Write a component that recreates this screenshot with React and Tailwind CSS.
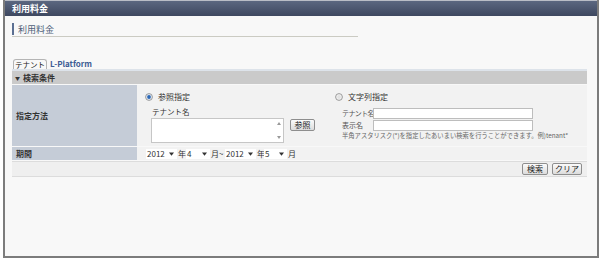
import React from "react";

const font = { fontFamily: '"Noto Sans CJK JP", "Noto Sans", sans-serif' };

function Radio({ on }) {
  return (
    <svg width="8" height="8" viewBox="0 0 8 8" className="shrink-0">
      <circle cx="4" cy="4" r="3.4" fill={on ? "#e8eef6" : "#f4f4f4"} stroke="#8f8f8f" strokeWidth="0.9" />
      {on ? <circle cx="4" cy="4" r="1.9" fill="#2b67b5" /> : <circle cx="4" cy="4" r="1.9" fill="#e2e2e2" />}
    </svg>
  );
}

function Tri() {
  return (
    <svg width="5" height="4" viewBox="0 0 5 4" className="shrink-0">
      <path d="M0 0.5 L5 0.5 L2.5 3.8 Z" fill="#333" />
    </svg>
  );
}

function Sel({ v, w }) {
  return (
    <div className={`flex items-center justify-between bg-white h-[10px] pl-[1px] pr-[3px] ${w}`}>
      <span className="leading-none">{v}</span>
      <Tri />
    </div>
  );
}

function Btn({ children, w }) {
  return (
    <div
      className={`flex items-center justify-center h-[12px] border border-[#8e8e8e] rounded-[2px] bg-gradient-to-b from-[#fbfbfb] to-[#dcdcdc] text-[8px] leading-none text-[#222] ${w}`}
    >
      {children}
    </div>
  );
}

export default function App() {
  return (
    <div className="w-[600px] h-[260px] bg-white overflow-hidden" style={font}>
      <div className="ml-[3px] w-[596px] h-[258px] border-l-2 border-r-2 border-b-2 border-[#7c7c7c] bg-[#f8f8f8] flex flex-col">
        {/* title bar */}
        <div className="h-[16px] border-t border-[#b9bdc6] bg-gradient-to-b from-[#5b6780] to-[#3e4860] flex items-center pl-[7px]">
          <span className="text-white font-bold text-[9px] leading-none">利用料金</span>
        </div>

        {/* subtitle */}
        <div className="ml-[7px] mt-[7px] w-[346px] h-[14px] border-b-[1.5px] border-[#cbcbc3] flex items-start">
          <div className="h-[12px] border-l-2 border-[#5b6f92] pl-[4px] flex items-center">
            <span className="text-[9px] leading-none text-[#4f5f78]">利用料金</span>
          </div>
        </div>

        {/* section */}
        <div className="ml-[7px] mt-[22px] w-[575px] flex flex-col">
          {/* tabs */}
          <div className="h-[10px] flex items-end">
            <div className="ml-[1px] h-[10px] px-[1px] border-l border-r border-t border-[#b5b5b5] rounded-t-[3px] flex items-center">
              <span className="text-[7.5px] leading-none text-[#222]">テナント</span>
            </div>
            <div className="ml-[3px] h-[10px] flex items-center">
              <span className="text-[8px] leading-none font-bold text-[#3d5c94]">L-Platform</span>
            </div>
          </div>
          <div className="h-[2px] bg-[#dde3ea]" />
          <div className="h-[13px] bg-[#cacaca] flex items-center pl-[3px] gap-[3px]">
            <span className="text-[5px] leading-none text-[#333]">▼</span>
            <span className="text-[8px] leading-none font-bold text-[#333]">検索条件</span>
          </div>

          {/* row 1 */}
          <div className="flex h-[61px] mt-[1px]">
            <div className="w-[125px] bg-[#c5ccd7] flex items-center pl-[4px]">
              <span className="text-[8px] leading-none font-bold text-[#333]">指定方法</span>
            </div>
            <div className="flex-1 bg-[#f2f2f2] flex pl-[8px] pt-[8px]">
              <div className="w-[190px] flex flex-col">
                <div className="h-[8px] flex items-center gap-[5px]">
                  <Radio on />
                  <span className="text-[8px] leading-none text-[#333]">参照指定</span>
                </div>
                <div className="mt-[7px] h-[8px] pl-[7px] flex items-center">
                  <span className="text-[7.5px] leading-none text-[#333] whitespace-nowrap">テナント名</span>
                </div>
                <div className="mt-[2px] ml-[6px] flex items-start gap-[6px]">
                  <div className="w-[133px] h-[25px] bg-white border border-[#c6c6c6] flex justify-end">
                    <div className="w-[8px] flex flex-col items-center justify-between py-[3px]">
                      <svg width="4" height="3" viewBox="0 0 4 3"><path d="M0 3 L4 3 L2 0 Z" fill="#999" /></svg>
                      <svg width="4" height="3" viewBox="0 0 4 3"><path d="M0 0 L4 0 L2 3 Z" fill="#999" /></svg>
                    </div>
                  </div>
                  <div className="mt-[1px]">
                    <Btn w="w-[25px]">参照</Btn>
                  </div>
                </div>
              </div>
              <div className="flex flex-col">
                <div className="h-[8px] flex items-center gap-[5px]">
                  <Radio />
                  <span className="text-[8px] leading-none text-[#333]">文字列指定</span>
                </div>
                <div className="mt-[6px] flex items-center pl-[7px] h-[12px]">
                  <span className="w-[31px] shrink-0 whitespace-nowrap text-[7px] tracking-[-0.6px] leading-none text-[#555]">テナント名</span>
                  <div className="w-[160px] h-[11px] bg-white border border-[#bdbdbd]" />
                </div>
                <div className="flex items-center pl-[7px] h-[12px]">
                  <span className="w-[31px] shrink-0 whitespace-nowrap text-[7px] leading-none text-[#555]">表示名</span>
                  <div className="w-[160px] h-[11px] bg-white border border-[#bdbdbd]" />
                </div>
                <div className="mt-[1px] pl-[7px] h-[8px] flex items-center whitespace-nowrap">
                  <span className="text-[6.3px] leading-none text-[#666]">
                    半角アスタリスク(*)を指定したあいまい検索を行うことができます。例)tenant*
                  </span>
                </div>
              </div>
            </div>
          </div>

          {/* row 2 */}
          <div className="flex h-[13px] mt-[1px]">
            <div className="w-[125px] bg-[#c5ccd7] flex items-center pl-[4px]">
              <span className="text-[8px] leading-none font-bold text-[#333]">期間</span>
            </div>
            <div className="flex-1 bg-[#f2f2f2] flex items-center pl-[9px] text-[8px] leading-none text-[#333]">
              <Sel v="2012" w="w-[31px]" />
              <span className="w-[9px] pl-[1px]">年</span>
              <Sel v="4" w="w-[24px]" />
              <span className="w-[15px] pl-[1px] whitespace-nowrap">月~</span>
              <Sel v="2012" w="w-[31px]" />
              <span className="w-[8px] pl-[1px]">年</span>
              <Sel v="5" w="w-[23px]" />
              <span className="pl-[1px]">月</span>
            </div>
          </div>

          {/* footer */}
          <div className="h-[16px] mt-[1px] bg-[#efefef] border-t border-b border-[#dcdcdc] flex items-center justify-end pr-[5px] gap-[4px]">
            <Btn w="w-[26px]">検索</Btn>
            <Btn w="w-[30px]">クリア</Btn>
          </div>
        </div>
      </div>
    </div>
  );
}
